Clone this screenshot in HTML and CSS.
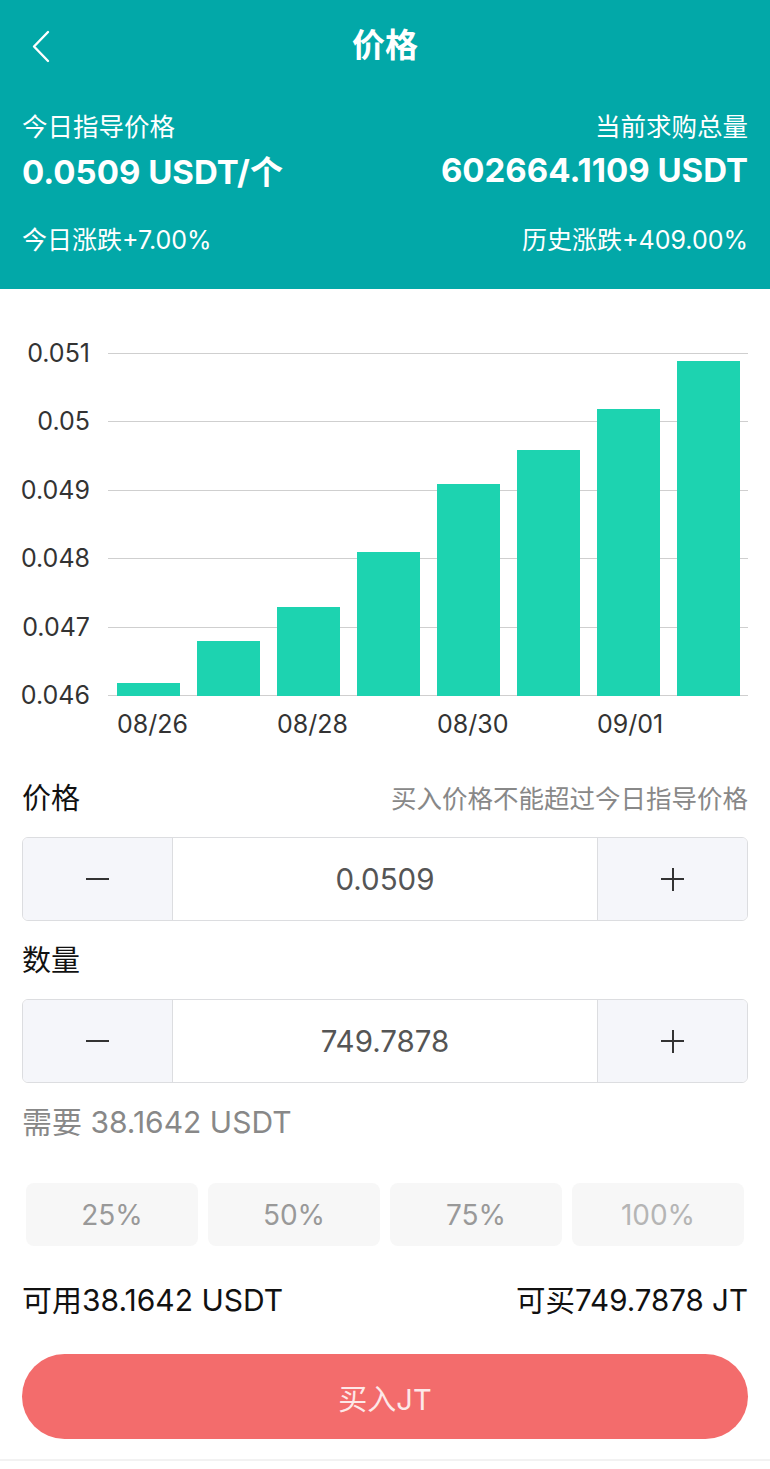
FILE: index.html
```html
<!DOCTYPE html>
<html lang="zh-CN">
<head>
    <meta charset="UTF-8">
    <meta name="viewport" content="width=device-width, initial-scale=1.0">
    <title>价格</title>
    <link rel="stylesheet" href="styles.css">
</head>
<body>
    <header class="summary">
        <div class="topbar">
            <button class="back" aria-label="返回">
                <svg width="20" height="34" viewBox="0 0 20 34"><path d="M17 2 L3 16.5 L17 31" fill="none" stroke="#fff" stroke-width="2.4" stroke-linecap="round" stroke-linejoin="round"/></svg>
            </button>
            <h1>价格</h1>
        </div>
        <div class="summary-row label-row">
            <span>今日指导价格</span>
            <span>当前求购总量</span>
        </div>
        <div class="summary-row value-row">
            <span>0.0509 USDT/个</span>
            <span>602664.1109 USDT</span>
        </div>
        <div class="summary-row change-row">
            <span>今日涨跌+7.00%</span>
            <span>历史涨跌+409.00%</span>
        </div>
    </header>

    <section class="chart">
        <div class="y-axis">
            <span>0.051</span>
            <span>0.05</span>
            <span>0.049</span>
            <span>0.048</span>
            <span>0.047</span>
            <span>0.046</span>
        </div>
        <div class="plot-wrap">
            <div class="plot">
                <div class="bar" style="height: 13px"></div>
                <div class="bar" style="height: 55px"></div>
                <div class="bar" style="height: 89px"></div>
                <div class="bar" style="height: 144px"></div>
                <div class="bar" style="height: 212px"></div>
                <div class="bar" style="height: 246px"></div>
                <div class="bar" style="height: 287px"></div>
                <div class="bar" style="height: 335px"></div>
            </div>
            <div class="x-axis">
                <span>08/26</span>
                <span>08/28</span>
                <span>08/30</span>
                <span>09/01</span>
            </div>
        </div>
    </section>

    <section class="form">
        <div class="field-head">
            <span class="field-title">价格</span>
            <span class="field-hint">买入价格不能超过今日指导价格</span>
        </div>
        <div class="stepper">
            <button class="step minus"><span></span></button>
            <div class="step-value">0.0509</div>
            <button class="step plus"><span></span></button>
        </div>

        <div class="field-head">
            <span class="field-title">数量</span>
        </div>
        <div class="stepper">
            <button class="step minus"><span></span></button>
            <div class="step-value">749.7878</div>
            <button class="step plus"><span></span></button>
        </div>

        <div class="need">需要 38.1642 USDT</div>

        <div class="percents">
            <button>25%</button>
            <button>50%</button>
            <button>75%</button>
            <button class="faded">100%</button>
        </div>

        <div class="avail">
            <span>可用38.1642 USDT</span>
            <span class="avail-buy">可买749.7878 JT</span>
        </div>

        <button class="buy">买入JT</button>
    </section>
    <div class="bottom-line"></div>
</body>
</html>
```

FILE: styles.css
```css
body {
    margin: 0;
    font-family: Inter, "Noto Sans CJK SC", sans-serif;
    background: #fff;
    color: #222;
    width: 770px;
}

button {
    font-family: inherit;
    border: none;
    background: none;
    padding: 0;
    cursor: pointer;
}

/* Header summary */
.summary {
    background-color: #02a8a8;
    color: #fff;
    height: 289px;
    padding: 0 22px;
    box-sizing: border-box;
}

.topbar {
    position: relative;
    height: 90px;
    display: flex;
    align-items: center;
    justify-content: center;
}

.topbar h1 {
    margin: 0;
    font-size: 33px;
    font-weight: 700;
    line-height: 40px;
}

.back {
    position: absolute;
    left: 9px;
    top: 30px;
    width: 30px;
    height: 34px;
    display: flex;
    align-items: center;
}

.summary-row {
    display: flex;
    justify-content: space-between;
    align-items: center;
}

.label-row {
    margin-top: 16px;
    height: 36px;
    font-size: 25.5px;
}

.value-row {
    height: 56px;
    font-size: 33px;
    font-weight: 700;
}

.change-row {
    margin-top: 24px;
    height: 32px;
    font-size: 25px;
}

/* Chart */
.chart {
    display: flex;
    padding-top: 64px;
}

.y-axis {
    width: 90px;
    height: 370px;
    margin-top: -14px;
    display: flex;
    flex-direction: column;
    justify-content: space-between;
    align-items: flex-end;
    font-size: 25px;
    line-height: 28px;
    color: #333;
}

.plot-wrap {
    margin-left: 18px;
    width: 640px;
}

.plot {
    height: 343px;
    display: flex;
    align-items: flex-end;
    background: repeating-linear-gradient(to bottom, #cfcfcf 0, #cfcfcf 1px, transparent 1px, transparent 68.4px);
}

.bar {
    width: 63px;
    margin-left: 9px;
    margin-right: 8px;
    background-color: #1dd3b0;
}

.x-axis {
    display: flex;
    margin-top: 14px;
    font-size: 25px;
    line-height: 28px;
    color: #333;
}

.x-axis span {
    width: 63px;
    margin-left: 9px;
    margin-right: 88px;
    text-align: center;
    white-space: nowrap;
}

/* Form */
.form {
    padding: 0 22px;
}

.field-head {
    display: flex;
    justify-content: space-between;
    align-items: center;
    height: 36px;
    margin-top: 40px;
}

.stepper + .field-head {
    margin-top: 19px;
}

.field-title {
    font-size: 29px;
    color: #111;
}

.field-hint {
    font-size: 25.5px;
    color: #888;
}

.stepper {
    display: flex;
    height: 84px;
    margin-top: 23px;
    border: 1px solid #dcdde0;
    border-radius: 6px;
    box-sizing: border-box;
    overflow: hidden;
}

.step {
    width: 149px;
    background-color: #f5f6fa;
    display: flex;
    align-items: center;
    justify-content: center;
}

.step span {
    position: relative;
    display: block;
    width: 23px;
    height: 2px;
    background: #333;
}

.plus span::after {
    content: "";
    position: absolute;
    left: 10.5px;
    top: -10.5px;
    width: 2px;
    height: 23px;
    background: #333;
}

.step-value {
    flex: 1;
    border-left: 1px solid #dcdde0;
    border-right: 1px solid #dcdde0;
    display: flex;
    align-items: center;
    justify-content: center;
    font-size: 29.5px;
    color: #555;
}

.need {
    margin-top: 21px;
    line-height: 36px;
    font-size: 30px;
    color: #888;
}

.percents {
    display: flex;
    gap: 10px;
    padding: 0 4px;
    margin-top: 43px;
}

.percents button {
    flex: 1;
    height: 63px;
    border-radius: 8px;
    background-color: #f7f7f7;
    font-size: 28px;
    color: #999;
}

.percents .faded {
    color: #b5b5b5;
}

.avail {
    display: flex;
    justify-content: space-between;
    margin-top: 36px;
    line-height: 36px;
    font-size: 30px;
    color: #111;
}

.avail-buy {
    font-size: 29.5px;
}

.buy {
    display: block;
    width: 100%;
    height: 85px;
    margin-top: 36px;
    border-radius: 43px;
    background-color: #f36c6c;
    color: #fde8e8;
    font-size: 29px;
}

.bottom-line {
    margin-top: 20px;
    height: 2px;
    background: #f2f2f2;
}
```
